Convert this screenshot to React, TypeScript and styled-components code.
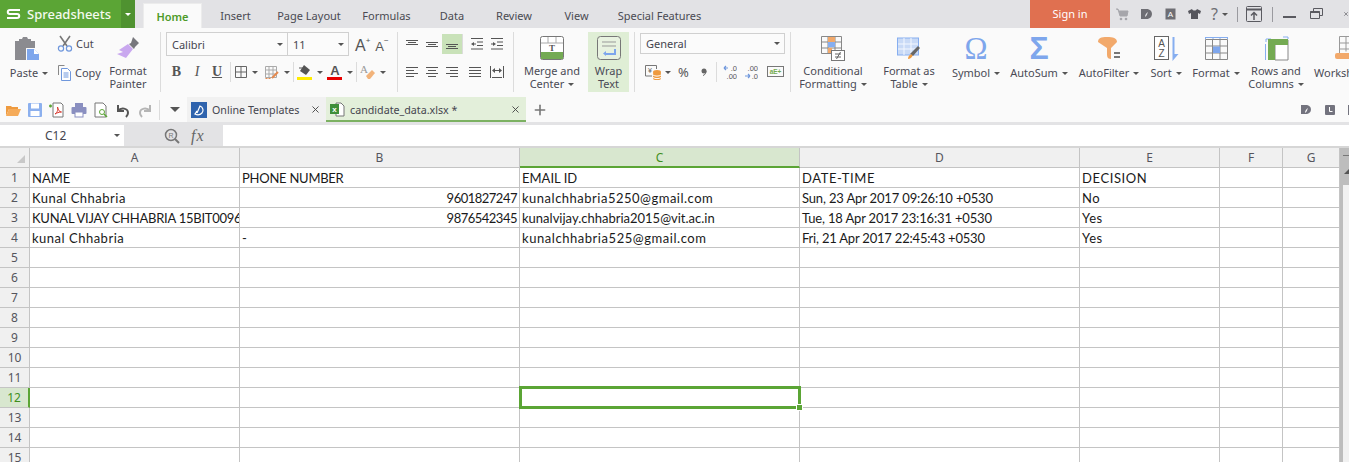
import { ReactNode } from "react";
import styled, { createGlobalStyle } from "styled-components";
import { Plus, X } from "lucide-react";

const UI_FONT = `"Noto Sans", "Open Sans", sans-serif`;
const GREEN = "#5ba535";
const LINE = "#c4c4c4";

const Global = createGlobalStyle`
  html, body { margin: 0; padding: 0; height: 462px; overflow: hidden; background: #fff; }
  * { box-sizing: border-box; }
`;

const Page = styled.div`
  width: 1349px;
  height: 462px;
  overflow: hidden;
  display: flex;
  flex-direction: column;
  font-family: ${UI_FONT};
  color: #45454f;
`;

const Gap = styled.span<{ $w: number }>`
  width: ${(p) => p.$w}px;
  flex: none;
`;

// --- title bar ---
const TitleBar = styled.div`
  height: 28px;
  flex: none;
  display: flex;
  background: #e2e2e5;
`;

const Logo = styled.div`
  width: 121px;
  background: ${GREEN};
  color: #f4faef;
  display: flex;
  align-items: center;
  gap: 6px;
  padding: 0 0 1px 6px;
  font-size: 13px;
  font-weight: 500;
  white-space: nowrap;
`;

const LogoCaret = styled.div`
  width: 14px;
  background: #4f9230;
  display: flex;
  align-items: center;
  justify-content: center;
`;

const Tabs = styled.div`
  display: flex;
  margin-left: 8px;
  width: 887px;
  align-items: flex-end;
`;

const Tab = styled.div<{ $w: number; $active?: boolean }>`
  width: ${(p) => p.$w}px;
  height: ${(p) => (p.$active ? 25 : 28)}px;
  padding-top: ${(p) => (p.$active ? 0 : 3)}px;
  display: flex;
  align-items: center;
  justify-content: center;
  font-size: 11px;
  color: ${(p) => (p.$active ? "#4d9a28" : "#4a4a52")};
  background: ${(p) => (p.$active ? "#fafafa" : "transparent")};
  border: ${(p) => (p.$active ? "1px solid #ececec" : "none")};
  border-bottom: none;
  font-weight: ${(p) => (p.$active ? 600 : 400)};
`;

const SignIn = styled.div`
  width: 80px;
  background: #e07050;
  color: #fff;
  font-size: 11px;
  display: flex;
  align-items: center;
  justify-content: center;
  padding-bottom: 1px;
`;

const WindowTools = styled.div`
  flex: 1;
  display: flex;
  align-items: center;
  padding-left: 6px;
  overflow: hidden;
`;

const ToolDivider = styled.span`
  width: 1px;
  height: 15px;
  background: #9a9a9f;
  flex: none;
`;

const HelpMark = styled.span`
  width: 18px;
  flex: none;
  display: flex;
  align-items: center;
  font-size: 16px;
  line-height: 16px;
  color: #6e6e74;
`;

// --- ribbon ---
const Ribbon = styled.div`
  height: 69px;
  flex: none;
  display: flex;
  background: #fafafa;
  overflow: hidden;
`;

const Group = styled.div<{ $w: number }>`
  width: ${(p) => p.$w}px;
  flex: none;
  display: flex;
  align-items: flex-start;
`;

const Sep = styled.div`
  width: 1px;
  height: 60px;
  margin-top: 4px;
  flex: none;
  background: #dcdcdc;
`;

const BigButton = styled.div<{ $w: number; $on?: boolean; $ml?: number }>`
  width: ${(p) => p.$w}px;
  margin-left: ${(p) => p.$ml ?? 0}px;
  flex: none;
  height: 60px;
  margin-top: 4px;
  display: flex;
  flex-direction: column;
  align-items: center;
  background: ${(p) => (p.$on ? "#dfeed5" : "transparent")};
  font-size: 11px;
  line-height: 13px;
  text-align: center;
  white-space: nowrap;
  color: #4a4a55;
`;

const IconSlot = styled.div`
  height: 32px;
  padding-top: 4px;
  display: flex;
  justify-content: center;
  flex: none;
`;

const OmegaSlot = styled(IconSlot)`
  padding-top: 1px;
  font-family: "Liberation Serif", serif;
  font-size: 31px;
  line-height: 31px;
  color: #7ea6ec;
`;

const SigmaSlot = styled(IconSlot)`
  padding-top: 1px;
  font-family: "Liberation Sans", sans-serif;
  font-size: 32px;
  line-height: 31px;
  font-weight: 700;
  color: #7ea6ec;
`;

const SheetSlot = styled(IconSlot)`
  justify-content: flex-start;
  padding-left: 21px;
`;

const SingleLabel = styled.span`
  display: block;
  margin-top: 2px;
`;

const PasteLabel = styled(SingleLabel)`
  padding-left: 4px;
`;

const Caret = styled.span`
  display: inline-block;
  width: 0;
  height: 0;
  margin-left: 4px;
  vertical-align: 2px;
  border-left: 3px solid transparent;
  border-right: 3px solid transparent;
  border-top: 3px solid #555;
  flex: none;
`;

const WhiteCaret = styled(Caret)`
  margin: 0;
  border-top-color: #fff;
`;

const QuickCaret = styled(Caret)`
  margin: 0 0 0 4px;
  border-left-width: 5px;
  border-right-width: 5px;
  border-top-width: 5px;
`;

const SmallStack = styled.div`
  width: 47px;
  flex: none;
  margin-left: 10px;
  padding-top: 7px;
  display: flex;
  flex-direction: column;
  gap: 13px;
  font-size: 11px;
  color: #4a4a55;
`;

const SmallRow = styled.div`
  display: flex;
  align-items: center;
  gap: 3px;
  height: 16px;
`;

const FontStack = styled.div`
  display: flex;
  flex-direction: column;
  padding: 4px 0 0 5px;
  gap: 4px;
`;

const ToolRow = styled.div`
  display: flex;
  align-items: center;
  height: 24px;
`;

const Select = styled.div<{ $w: number; $h?: number; $joined?: boolean }>`
  width: ${(p) => p.$w}px;
  height: ${(p) => p.$h ?? 24}px;
  border: 1px solid #d0d0d0;
  border-left-width: ${(p) => (p.$joined ? 0 : 1)}px;
  background: #fbfbfb;
  display: flex;
  align-items: center;
  justify-content: space-between;
  padding: 0 4px 0 5px;
  font-size: 11px;
  color: #45454f;
`;

const Toggle = styled.span<{ $w?: number; $b?: boolean; $i?: boolean; $u?: boolean }>`
  width: ${(p) => p.$w ?? 20}px;
  display: inline-flex;
  align-items: center;
  justify-content: center;
  flex: none;
  font-family: "Liberation Serif", serif;
  font-size: 14px;
  color: #555;
  font-weight: ${(p) => (p.$b ? 700 : 400)};
  font-style: ${(p) => (p.$i ? "italic" : "normal")};
  text-decoration: ${(p) => (p.$u ? "underline" : "none")};
`;

const Grow = styled.span<{ $size: number; $ml?: number }>`
  font-family: "Liberation Sans", sans-serif;
  font-size: ${(p) => p.$size}px;
  color: #555;
  margin-left: ${(p) => p.$ml ?? 0}px;
  position: relative;
  top: 2px;
`;

const Script = styled.sup`
  font-size: 8px;
  line-height: 0;
  vertical-align: 8px;
`;

const MiniSep = styled.span`
  width: 1px;
  height: 20px;
  background: #dcdcdc;
  margin: 0 3px;
  flex: none;
`;

const QuickSep = styled(MiniSep)`
  margin: 0;
`;

const AlignGrid = styled.div`
  display: grid;
  grid-template-columns: 20px 20px 20px 25px 20px;
  grid-auto-rows: 20px;
  row-gap: 8px;
  padding: 6px 0 0 4px;
`;

const AlignCell = styled.div<{ $on?: boolean; $rule?: boolean }>`
  display: flex;
  align-items: center;
  justify-content: center;
  background: ${(p) => (p.$on ? "#c9e2b9" : "transparent")};
  border-left: ${(p) => (p.$rule ? "1px solid #dcdcdc" : "none")};
  padding-left: ${(p) => (p.$rule ? 4 : 0)}px;
`;

const NumberStack = styled.div`
  display: flex;
  flex-direction: column;
  padding: 5px 0 0 5px;
  gap: 6px;
`;

const Percent = styled.span`
  font-size: 13px;
  color: #555;
  flex: none;
`;

const Worksheet = styled.div`
  flex: none;
  width: 60px;
  margin-left: 4px;
`;

const WorksheetButton = styled(BigButton)`
  align-items: flex-start;
  padding-left: 5px;
`;

// --- quick access / document tabs ---
const QuickRow = styled.div`
  height: 25px;
  flex: none;
  display: flex;
  align-items: stretch;
  background: #fafafa;
`;

const QuickIcons = styled.div`
  width: 187px;
  display: flex;
  align-items: center;
  gap: 6px;
  padding-left: 5px;
  flex: none;
`;

const DocTab = styled.div<{ $w: number; $active?: boolean }>`
  width: ${(p) => p.$w}px;
  flex: none;
  display: flex;
  align-items: center;
  gap: 5px;
  padding: 2px 5px 0 4px;
  font-size: 10.7px;
  background: ${(p) => (p.$active ? "#e3efda" : "#f1f1f1")};
  border-bottom: 2px solid ${(p) => (p.$active ? "#7cb162" : "#f1f1f1")};
  color: #45454f;
`;

const DocTitle = styled.span`
  flex: 1;
  white-space: nowrap;
`;

const AddTab = styled.div`
  width: 27px;
  flex: none;
  display: flex;
  align-items: center;
  justify-content: center;
`;

const QuickRight = styled.div`
  flex: 1;
  display: flex;
  align-items: center;
  justify-content: flex-end;
  overflow: hidden;
`;

const EdgeChip = styled.span`
  width: 1px;
  height: 10px;
  background: #73737e;
  flex: none;
`;

// --- formula bar ---
const FormulaBar = styled.div`
  height: 26px;
  flex: none;
  display: flex;
  background: #e3e3e5;
  padding: 3px 0 0;
  border-bottom: 2px solid #d6d6d6;
`;

const NameBox = styled.div`
  width: 124px;
  flex: none;
  background: #fff;
  font-size: 12px;
  display: flex;
  align-items: center;
  justify-content: space-between;
  padding: 0 4px 0 45px;
`;

const FormulaTools = styled.div`
  width: 99px;
  flex: none;
  display: flex;
  align-items: center;
  gap: 11px;
  padding-left: 40px;
`;

const Fx = styled.span`
  font-family: "Liberation Serif", serif;
  font-style: italic;
  font-size: 16px;
  letter-spacing: 1px;
  color: #666;
`;

const FormulaInput = styled.div`
  flex: 1;
  background: #fff;
`;

// --- sheet ---
const SheetArea = styled.div`
  flex: 1;
  display: flex;
  min-height: 0;
  overflow: hidden;
`;

const SheetGrid = styled.div`
  width: 1340px;
  flex: none;
  display: grid;
  grid-template-columns: 30px 210px 280px 280px 280px 140px 63px 57px;
  grid-auto-rows: 20px;
  align-content: start;
`;

const ColHead = styled.div<{ $on?: boolean }>`
  height: 20px;
  display: flex;
  align-items: center;
  justify-content: center;
  font-size: 12px;
  background: ${(p) => (p.$on ? "#d8e7cf" : "#f0f0f0")};
  color: ${(p) => (p.$on ? "#3f8f1d" : "#55555d")};
  border-right: 1px solid ${LINE};
  border-bottom: ${(p) => (p.$on ? `2px solid ${GREEN}` : `1px solid ${LINE}`)};
`;

const Corner = styled(ColHead)`
  align-items: flex-end;
  justify-content: flex-end;
  padding: 0 4px 4px 0;
`;

const RowHead = styled.div<{ $on?: boolean }>`
  display: flex;
  align-items: center;
  justify-content: center;
  font-size: 12px;
  background: ${(p) => (p.$on ? "#d8e7cf" : "#f0f0f0")};
  color: ${(p) => (p.$on ? "#3f8f1d" : "#55555d")};
  border-bottom: 1px solid ${LINE};
  border-right: ${(p) => (p.$on ? `2px solid ${GREEN}` : `1px solid ${LINE}`)};
`;

const Cell = styled.div<{ $right?: boolean; $track?: number }>`
  position: relative;
  border-right: 1px solid ${LINE};
  border-bottom: 1px solid ${LINE};
  font-family: "Lato", "Open Sans", sans-serif;
  font-size: 13px;
  letter-spacing: ${(p) => p.$track ?? 0}px;
  line-height: 20px;
  padding: 0 2px;
  color: #1a1a1a;
  white-space: nowrap;
  overflow: hidden;
  text-align: ${(p) => (p.$right ? "right" : "left")};
`;

const Selection = styled.div`
  position: absolute;
  left: -1px;
  top: -2px;
  width: 282px;
  height: 23px;
  border: 3px solid ${GREEN};
  pointer-events: none;
`;

const Handle = styled.div`
  position: absolute;
  left: 277px;
  top: 17px;
  width: 5px;
  height: 5px;
  background: ${GREEN};
  outline: 1px solid #fff;
`;

const SelectedCell = styled(Cell)`
  overflow: visible;
  z-index: 2;
`;

const ScrollBar = styled.div`
  flex: 1;
  display: flex;
  flex-direction: column;
  border-left: 3px solid #bdbdbd;
  background: #f1f1f1;
  overflow: hidden;
`;

const ScrollTop = styled.div`
  height: 37px;
  background: #bdbdbd;
  display: flex;
  flex-direction: column;
  align-items: flex-start;
  gap: 13px;
  padding-top: 7px;
`;

const ScrollLine = styled.span`
  width: 100%;
  height: 1px;
  background: #777;
  flex: none;
`;

const ScrollArrow = styled.span`
  width: 0;
  height: 0;
  flex: none;
  margin-left: 1px;
  border-left: 5px solid transparent;
  border-right: 5px solid transparent;
  border-bottom: 5px solid #555;
`;

// --- drawn icons ---
const I = ({ w = 16, h = 16, children }: { w?: number; h?: number; children: ReactNode }) => (
  <svg width={w} height={h} viewBox={`0 0 ${w} ${h}`} fill="none" style={{ flex: "none", display: "block" }}>
    {children}
  </svg>
);

const PasteIcon = () => (
  <I w={26} h={25}>
    <path d="M1 5h4V3h3l1-2h4l1 2h3v2h4v7H12v12H1z" fill="#8b8b90" />
    <path d="M13 13h7l5 5v6H13z" fill="#7ea6ec" />
    <path d="M20 13v5h5" fill="#fff" />
  </I>
);

const Scissors = () => (
  <I w={16} h={17}>
    <path d="M3 1l7 10M13 1L6 11" stroke="#777" strokeWidth="1.6" />
    <circle cx="4" cy="13.5" r="2.6" stroke="#6f97dc" strokeWidth="1.2" />
    <circle cx="12" cy="13.5" r="2.6" stroke="#6f97dc" strokeWidth="1.2" />
  </I>
);

const CopyIcon = () => (
  <I w={15} h={17}>
    <path d="M1.5 11V1.5h6" stroke="#888" />
    <path d="M4.5 4.5h6l3 3v9h-9z" fill="#fff" stroke="#6f97dc" />
    <path d="M6.5 9h5M6.5 11h5M6.5 13h5" stroke="#6f97dc" />
  </I>
);

const Brush = () => (
  <I w={25} h={25}>
    <path d="M17 1l6 6-4 4-1 2-5-5 2-1z" fill="#77777d" />
    <path d="M12 8l5 5-7 9-9-4 6-2-4-2z" fill="#c9a8ef" />
  </I>
);

const BordersIcon = () => (
  <I w={14} h={14}>
    <path d="M1.5 1.5h11v11h-11zM7 1.5v11M1.5 7h11" stroke="#666" />
  </I>
);

const TableBorder = () => (
  <I w={16} h={15}>
    <path d="M1.5 1.5h11v11h-11zM5 1.5v11M9 1.5v11M1.5 5h11M1.5 9h11" stroke="#aaa" />
    <path d="M1.5 13.5h6" stroke="#e58a4e" strokeDasharray="2 1" />
    <path d="M8 13l6-6" stroke="#e58a4e" strokeWidth="2" />
  </I>
);

const FillIcon = () => (
  <I w={16} h={16}>
    <path d="M7 1l6 5-4 5-6-4z" fill="#555" />
    <path d="M2 4h6" stroke="#555" />
    <rect x="0" y="13" width="15" height="3" fill="#ffec00" />
  </I>
);

const FontColor = () => (
  <I w={16} h={16}>
    <text x="8" y="11" textAnchor="middle" fontFamily="Liberation Sans" fontWeight="700" fontSize="13" fill="#555">
      A
    </text>
    <rect x="0" y="13" width="15" height="3" fill="#e80000" />
  </I>
);

const Eraser = () => (
  <I w={16} h={16}>
    <text x="0" y="9" fontFamily="Liberation Serif" fontSize="11" fill="#999">
      A
    </text>
    <path d="M6 12l6-6 3 3-5 6H8z" fill="#f2b37a" />
  </I>
);

const Lines = ({ kind }: { kind: "top" | "mid" | "bottom" | "left" | "center" | "right" | "just" }) => {
  const layouts: Record<string, string> = {
    top: "M1 2.500h12M3 4.500h8M1 6.500h12",
    mid: "M1 4.500h12M3 6.500h8M1 8.500h12",
    bottom: "M1 6.500h12M3 8.500h8M1 10.500h12",
    left: "M1 1.500h12M1 4.500h8M1 7.500h12M1 10.500h8",
    center: "M1 1.500h12M3 4.500h8M1 7.500h12M3 10.500h8",
    right: "M1 1.500h12M5 4.500h8M1 7.500h12M5 10.500h8",
    just: "M1 1.500h12M1 4.500h12M1 7.500h12M1 10.500h12",
  };
  return (
    <I w={14} h={13}>
      <path d={layouts[kind]} stroke="#555" />
    </I>
  );
};

const Indent = ({ out }: { out?: boolean }) => (
  <I w={14} h={14}>
    <path d="M1 1.500h12M7 5h6M7 8.500h6M1 12h12" stroke="#555" />
    <path d={out ? "M1 7l3-2v4z" : "M6 7L3 5v4z"} fill="#555" />
    <path d={out ? "M3 7h3" : "M1 7h3"} stroke="#555" />
  </I>
);

const Distribute = () => (
  <I w={16} h={14}>
    <path d="M1.500 1v12M14.500 1v12M3 12.500h10M4 5.500h8" stroke="#555" />
    <path d="M3 5.500l3-2.500v5zM13 5.500L10 3v5z" fill="#555" />
  </I>
);

const MergeIcon = () => (
  <I w={24} h={24}>
    <rect x="0.5" y="0.5" width="23" height="23" rx="2" fill="#fff" stroke="#777" />
    <path d="M8 1v6M16 1v6M1 7h22" stroke="#aaa" />
    <rect x="1" y="16" width="22" height="7" fill="#74aa53" />
    <text x="12" y="14.500" textAnchor="middle" fontFamily="Liberation Serif" fontWeight="700" fontSize="9" fill="#555">
      T
    </text>
  </I>
);

const WrapIcon = () => (
  <I w={24} h={24}>
    <rect x="0.5" y="0.5" width="23" height="23" rx="3" fill="#e8f2e0" stroke="#777" />
    <path d="M5 6h14M5 10h14" stroke="#999" />
    <path d="M18 13v5H8" stroke="#7ea6ec" strokeWidth="2" />
    <path d="M9 15v5l-3-2.500z" fill="#7ea6ec" />
  </I>
);

const CurrencyIcon = () => (
  <I w={17} h={17}>
    <path d="M8 12H1.500V1.500h11V5" stroke="#777" />
    <text x="4" y="9" fontFamily="Liberation Sans" fontSize="7" fill="#666">
      ¥
    </text>
    <ellipse cx="13" cy="8" rx="4" ry="2" fill="#ee9a3f" />
    <rect x="9" y="8" width="8" height="8" rx="2" fill="#ee9a3f" />
    <path d="M9 11c2 1.500 6 1.500 8 0M9 13.500c2 1.500 6 1.500 8 0" stroke="#fff" />
  </I>
);

const CommaIcon = () => (
  <I w={6} h={8}>
    <circle cx="3" cy="3" r="2.500" fill="#666" />
    <path d="M5 3c0 2-1 4-3 4.500" stroke="#666" />
  </I>
);

const DecimalIcon = ({ more }: { more?: boolean }) => (
  <I w={14} h={16}>
    <text x="14" y="7" textAnchor="end" fontFamily="Liberation Sans" fontSize="7.500" fill="#555">
      {more ? ".0" : ".00"}
    </text>
    <text x="14" y="15" textAnchor="end" fontFamily="Liberation Sans" fontSize="7.500" fill="#555">
      {more ? ".00" : ".0"}
    </text>
    <path d={more ? "M1 4h4M1 4l2-2M1 4l2 2" : "M1 12h5M6 12l-2-2M6 12l-2 2"} stroke="#6f97dc" strokeWidth="1.200" />
  </I>
);

const AeIcon = () => (
  <I w={17} h={12}>
    <rect x="0.5" y="0.500" width="16" height="10" stroke="#777" />
    <text x="8.500" y="8" textAnchor="middle" fontFamily="Liberation Sans" fontWeight="700" fontSize="6.500" fill="#74aa53">
      aE+
    </text>
  </I>
);

const CondIcon = () => (
  <I w={24} h={25}>
    <path d="M.5.500h20v17H.5zM7 .5v17M14 .5v17M.5 6h20M.5 12h20" stroke="#888" />
    <rect x="7" y="1" width="7" height="5" fill="#f2a96b" />
    <rect x="7" y="6" width="7" height="5" fill="#86aef0" />
    <rect x="7" y="12" width="4" height="5" fill="#f2a96b" />
    <rect x="10.500" y="14.500" width="13" height="10" fill="#fff" stroke="#777" />
    <path d="M14 18h6M14 21h6M15.500 23l4-7" stroke="#666" />
  </I>
);

const TableStyleIcon = () => (
  <I w={24} h={24}>
    <rect x="0.5" y="2" width="21" height="17" fill="#c9daf6" stroke="#86aef0" />
    <path d="M7 2v17M14 2v17M1 8h20M1 13h20" stroke="#f4f8ff" />
    <path d="M13 18l8-8 2 2-7 8z" fill="#666" />
    <path d="M11 23c0-3 2-5 4-4.500 1 1 0 4-4 4.500z" fill="#ee9a3f" />
  </I>
);

const FunnelIcon = () => (
  <I w={24} h={24}>
    <path d="M1 6C1 2 4 1 10 1s10 1 10 5l-6 6v11c-2 0-4-1-4-4v-7z" fill="#f2a96b" />
    <path d="M17 17h6M17 21h6" stroke="#777" strokeWidth="2" />
  </I>
);

const SortIcon = () => (
  <I w={25} h={25}>
    <rect x="0.5" y="0.5" width="14" height="23" stroke="#666" fill="#fff" />
    <text x="7.500" y="11" textAnchor="middle" fontFamily="Liberation Sans" fontSize="10" fill="#555">
      A
    </text>
    <text x="7.500" y="21" textAnchor="middle" fontFamily="Liberation Sans" fontSize="10" fill="#555">
      Z
    </text>
    <path d="M18.500 1h2v17h4l-6 7z" fill="#86aef0" />
  </I>
);

const FormatIcon = () => (
  <I w={23} h={25}>
    <path d="M.5 1v2M8 1v2M15 1v2M22.500 1v2M.5 1.500h22" stroke="#86aef0" />
    <path d="M.5 3.500h22v20H.5zM7.500 3.500v20M15 3.500v20M.5 10h22M.5 17h22" stroke="#888" />
    <rect x="8" y="10.500" width="7" height="6.500" fill="#7ea6ec" />
  </I>
);

const RowsIcon = () => (
  <I w={25} h={25}>
    <path d="M2 6V3h5M19 1h5v2" stroke="#86aef0" />
    <path d="M11 4h13v20H11z" fill="#fff" stroke="#888" />
    <rect x="4" y="3" width="20" height="6" fill="#74aa53" />
    <rect x="4" y="9" width="7" height="15" fill="#74aa53" />
    <path d="M1.500 8v16" stroke="#86aef0" />
  </I>
);

const WorksheetIcon = () => (
  <I w={24} h={25}>
    <path d="M4.500 .5h19v22h-19zM4.500 7h19M4.500 13h19M11 .5v15M17 .5v15" stroke="#999" />
    <rect x="0" y="17" width="24" height="6" rx="2" fill="#f2a96b" />
  </I>
);

const QuickSet = () => (
  <>
    <I>
      <path d="M1 4h5l1 1h6v2H4L1 14z" fill="#ee9a3f" />
      <path d="M4 7h12l-3 7H1z" fill="#f5ab5a" />
    </I>
    <I>
      <rect x="1" y="1" width="14" height="14" rx="1" fill="#8cb0ee" />
      <rect x="4" y="1.500" width="8" height="5" fill="#fff" />
      <rect x="3.500" y="9" width="9" height="5" fill="#fff" />
    </I>
    <I>
      <path d="M4 1h8l2 2v12H4z" fill="#fff" stroke="#777" />
      <path d="M0 4h3M1.500 2.500v3" stroke="#5ba535" strokeWidth="1.500" />
      <path d="M6 12c3-2 3-5 2.500-7 .5 3 2 5 4 5-3 0-4.500 1-6.500 2z" stroke="#d9352b" />
    </I>
    <I>
      <rect x="4" y="1" width="8" height="4" fill="#8a8fc0" />
      <rect x="0.500" y="5" width="15" height="7" rx="1" fill="#8a8fc0" />
      <rect x="4" y="10" width="8" height="5" fill="#fff" stroke="#8a8fc0" />
    </I>
    <I>
      <path d="M2 1h8l3 3v11H2z" fill="#fff" stroke="#777" />
      <circle cx="9" cy="10" r="2.500" stroke="#5ba535" />
      <path d="M11 12l3 3" stroke="#5ba535" strokeWidth="1.500" />
    </I>
    <I>
      <path d="M3 3v6h6" stroke="#555" strokeWidth="2" />
      <path d="M3 9c3-4 10-3 10 2 0 1-1 3-2 4" stroke="#555" strokeWidth="2" />
    </I>
    <I>
      <path d="M13 3v6H7" stroke="#b5b5b5" strokeWidth="2" />
      <path d="M13 9C10 5 3 6 3 11c0 1 1 3 2 4" stroke="#b5b5b5" strokeWidth="2" />
    </I>
  </>
);

const DocLogo = () => (
  <I>
    <rect width="16" height="16" fill="#2f63ad" />
    <path d="M6 11l3-7c3 1 4 5 2 7-2 2-5 2-7 1 1-1 1-2 2-3" stroke="#fff" strokeWidth="1.200" />
  </I>
);

const XlsxIcon = () => (
  <I w={15} h={15}>
    <path d="M6 1h5l3 3v10H6z" fill="#fff" stroke="#777" />
    <rect x="0" y="2" width="9" height="10" fill="#3f8f3a" />
    <text x="4.500" y="10" textAnchor="middle" fontFamily="Liberation Sans" fontWeight="700" fontSize="8" fill="#fff">
      x
    </text>
  </I>
);

const SearchR = () => (
  <I>
    <circle cx="7" cy="7" r="5.500" stroke="#777" strokeWidth="1.500" />
    <path d="M11 11l4 4" stroke="#777" strokeWidth="2" />
    <text x="7" y="9.500" textAnchor="middle" fontFamily="Liberation Sans" fontSize="7" fill="#777">
      R
    </text>
  </I>
);

const LogoS = () => (
  <I w={15} h={12}>
    <path d="M14 2H4C1 2 1 6 4 6h7c3 0 3 4 0 4H1" stroke="#fff" strokeWidth="2" />
  </I>
);

const LeafBadge = ({ size, fill, leaf }: { size: number; fill: string; leaf: string }) => (
  <I w={size} h={size + 1}>
    <path d={`M0 1h${size / 2}c${size * 0.66} 0 ${size * 0.66} ${size - 1} 0 ${size - 1}H0z`} fill={fill} />
    <path d="M4 9c0-2 1-4 3-5-1 2-1 4-3 5z" fill={leaf} />
  </I>
);

const ClockChip = () => (
  <I w={10} h={10}>
    <rect width="10" height="10" rx="1" fill="#73737e" />
    <path d="M4.500 2v4.500H7.500" stroke="#fff" />
  </I>
);

const HeadIcons = () => (
  <>
    <I w={13} h={13}>
      <path d="M0 1h2l2 7h7l1-5H3" fill="#a6a6ab" stroke="#a6a6ab" />
      <circle cx="5" cy="11" r="1.300" fill="#a6a6ab" />
      <circle cx="10" cy="11" r="1.300" fill="#a6a6ab" />
    </I>
    <Gap $w={12} />
    <LeafBadge size={11} fill="#6e6e74" leaf="#e2e2e5" />
    <Gap $w={13} />
    <I w={11} h={13}>
      <rect x="0.500" y="0.500" width="10" height="11" fill="#6e6e74" />
      <text x="5.500" y="9" textAnchor="middle" fontFamily="Liberation Sans" fontSize="8" fill="#fff">
        A
      </text>
    </I>
    <Gap $w={12} />
    <I w={13} h={12}>
      <path d="M4 1L0 3l1 3 2-1v6h7V5l2 1 1-3-4-2c-1 2-4 2-5 0z" fill="#55555c" />
    </I>
    <Gap $w={10} />
    <HelpMark>
      ?
      <Caret />
    </HelpMark>
    <Gap $w={8} />
    <ToolDivider />
    <Gap $w={8} />
    <I>
      <rect x="0.500" y="0.500" width="15" height="15" rx="1" stroke="#5a5a60" />
      <path d="M1 3.500h14" stroke="#5a5a60" strokeWidth="2" />
      <path d="M8 14V7M5 9.500L8 6.500l3 3" stroke="#5a5a60" strokeWidth="1.500" />
    </I>
    <Gap $w={10} />
    <ToolDivider />
    <Gap $w={10} />
    <I w={13} h={14}>
      <path d="M0 10h13" stroke="#5a5a60" strokeWidth="2" />
    </I>
    <Gap $w={14} />
    <I w={13} h={12}>
      <path d="M3.500 3V.5h9v7H10M.5 3.500h9v7h-9z" stroke="#5a5a60" />
      <path d="M.5 4h9" stroke="#5a5a60" strokeWidth="2" />
    </I>
    <Gap $w={20} />
    <X size={14} color="#5a5a60" strokeWidth={2.5} />
  </>
);

// --- data ---
const tabs: [string, number][] = [
  ["Insert", 67],
  ["Page Layout", 80],
  ["Formulas", 75],
  ["Data", 56],
  ["Review", 68],
  ["View", 57],
  ["Special Features", 109],
];

const columns = ["A", "B", "C", "D", "E", "F", "G"];

// text and letter spacing, tuned per value because Calibri itself is not installed
type Value = [string, number?];

const rows: Value[][] = [
  [["NAME"], ["PHONE NUMBER", -0.25], ["EMAIL ID"], ["DATE-TIME", 0.6], ["DECISION", 0.6]],
  [["Kunal Chhabria", 0.5], ["9601827247", -0.5], ["kunalchhabria5250@gmail.com", 0.5], ["Sun, 23 Apr 2017 09:26:10 +0530", -0.16], ["No", 0.5]],
  [["KUNAL VIJAY CHHABRIA 15BIT0096", -0.25], ["9876542345", -0.5], ["kunalvijay.chhabria2015@vit.ac.in"], ["Tue, 18 Apr 2017 23:16:31 +0530", -0.16], ["Yes", 0.5]],
  [["kunal Chhabria", 0.5], ["-"], ["kunalchhabria525@gmail.com", 0.55], ["Fri, 21 Apr 2017 22:45:43 +0530", -0.2], ["Yes", 0.5]],
];

const isNumber = (v: string) => /^\d+$/.test(v);

function RowFragment({ index }: { index: number }) {
  const values = rows[index] ?? [];
  return (
    <>
      <RowHead $on={index === 11}>{index + 1}</RowHead>
      {columns.map((c, i) => {
        const [text = "", track] = values[i] ?? [];
        if (index === 11 && c === "C") {
          return (
            <SelectedCell key={c}>
              <Selection />
              <Handle />
            </SelectedCell>
          );
        }
        return (
          <Cell key={c} $right={isNumber(text)} $track={track}>
            {text}
          </Cell>
        );
      })}
    </>
  );
}

export default function App() {
  return (
    <Page>
      <Global />
      <TitleBar>
        <Logo>
          <LogoS />
          Spreadsheets
        </Logo>
        <LogoCaret>
          <WhiteCaret />
        </LogoCaret>
        <Tabs>
          <Tab $w={59} $active>
            Home
          </Tab>
          {tabs.map(([name, w]) => (
            <Tab key={name} $w={w}>
              {name}
            </Tab>
          ))}
        </Tabs>
        <SignIn>Sign in</SignIn>
        <WindowTools>
          <HeadIcons />
        </WindowTools>
      </TitleBar>

      <Ribbon>
        <Group $w={160}>
          <BigButton $w={40} $ml={7}>
            <IconSlot>
              <PasteIcon />
            </IconSlot>
            <PasteLabel>
              Paste
              <Caret />
            </PasteLabel>
          </BigButton>
          <SmallStack>
            <SmallRow>
              <Scissors />
              Cut
            </SmallRow>
            <SmallRow>
              <CopyIcon />
              Copy
            </SmallRow>
          </SmallStack>
          <BigButton $w={44} $ml={2}>
            <IconSlot>
              <Brush />
            </IconSlot>
            <span>
              Format
              <br />
              Painter
            </span>
          </BigButton>
        </Group>
        <Sep />
        <Group $w={236}>
          <FontStack>
            <ToolRow>
              <Select $w={122}>
                Calibri
                <Caret />
              </Select>
              <Select $w={61} $joined>
                11
                <Caret />
              </Select>
              <Grow $size={16} $ml={6}>
                A<Script>+</Script>
              </Grow>
              <Grow $size={13} $ml={5}>
                A<Script>−</Script>
              </Grow>
            </ToolRow>
            <ToolRow>
              <Toggle $w={21} $b>
                B
              </Toggle>
              <Toggle $i>I</Toggle>
              <Toggle $u $b>
                U
              </Toggle>
              <MiniSep />
              <BordersIcon />
              <Caret />
              <Gap $w={6} />
              <TableBorder />
              <Caret />
              <MiniSep />
              <FillIcon />
              <Caret />
              <Gap $w={4} />
              <FontColor />
              <Caret />
              <MiniSep />
              <Eraser />
              <Caret />
            </ToolRow>
          </FontStack>
        </Group>
        <Sep />
        <Group $w={115}>
          <AlignGrid>
            <AlignCell>
              <Lines kind="top" />
            </AlignCell>
            <AlignCell>
              <Lines kind="mid" />
            </AlignCell>
            <AlignCell $on>
              <Lines kind="bottom" />
            </AlignCell>
            <AlignCell $rule>
              <Indent out />
            </AlignCell>
            <AlignCell>
              <Indent />
            </AlignCell>
            <AlignCell>
              <Lines kind="left" />
            </AlignCell>
            <AlignCell>
              <Lines kind="center" />
            </AlignCell>
            <AlignCell>
              <Lines kind="right" />
            </AlignCell>
            <AlignCell>
              <Lines kind="just" />
            </AlignCell>
            <AlignCell>
              <Distribute />
            </AlignCell>
          </AlignGrid>
        </Group>
        <Sep />
        <Group $w={120}>
          <BigButton $w={60} $ml={8}>
            <IconSlot>
              <MergeIcon />
            </IconSlot>
            <span>
              Merge and
              <br />
              Center
              <Caret />
            </span>
          </BigButton>
          <BigButton $w={41} $ml={6} $on>
            <IconSlot>
              <WrapIcon />
            </IconSlot>
            <span>
              Wrap
              <br />
              Text
            </span>
          </BigButton>
        </Group>
        <Sep />
        <Group $w={155}>
          <NumberStack>
            <Select $w={145} $h={21}>
              General
              <Caret />
            </Select>
            <ToolRow>
              <Gap $w={4} />
              <CurrencyIcon />
              <Caret />
              <Gap $w={7} />
              <Percent>%</Percent>
              <Gap $w={12} />
              <CommaIcon />
              <Gap $w={6} />
              <MiniSep />
              <Gap $w={3} />
              <DecimalIcon more />
              <Gap $w={7} />
              <DecimalIcon />
              <Gap $w={9} />
              <AeIcon />
            </ToolRow>
          </NumberStack>
        </Group>
        <Sep />
        <BigButton $w={68} $ml={8}>
          <IconSlot>
            <CondIcon />
          </IconSlot>
          <span>
            Conditional
            <br />
            Formatting
            <Caret />
          </span>
        </BigButton>
        <BigButton $w={56} $ml={14}>
          <IconSlot>
            <TableStyleIcon />
          </IconSlot>
          <span>
            Format as
            <br />
            Table
            <Caret />
          </span>
        </BigButton>
        <BigButton $w={52} $ml={13}>
          <OmegaSlot>Ω</OmegaSlot>
          <SingleLabel>
            Symbol
            <Caret />
          </SingleLabel>
        </BigButton>
        <BigButton $w={58} $ml={8}>
          <SigmaSlot>Σ</SigmaSlot>
          <SingleLabel>
            AutoSum
            <Caret />
          </SingleLabel>
        </BigButton>
        <BigButton $w={62} $ml={10}>
          <IconSlot>
            <FunnelIcon />
          </IconSlot>
          <SingleLabel>
            AutoFilter
            <Caret />
          </SingleLabel>
        </BigButton>
        <BigButton $w={34} $ml={9}>
          <IconSlot>
            <SortIcon />
          </IconSlot>
          <SingleLabel>
            Sort
            <Caret />
          </SingleLabel>
        </BigButton>
        <BigButton $w={48} $ml={9}>
          <IconSlot>
            <FormatIcon />
          </IconSlot>
          <SingleLabel>
            Format
            <Caret />
          </SingleLabel>
        </BigButton>
        <BigButton $w={58} $ml={7}>
          <IconSlot>
            <RowsIcon />
          </IconSlot>
          <span>
            Rows and
            <br />
            Columns
            <Caret />
          </span>
        </BigButton>
        <Worksheet>
          <WorksheetButton $w={60}>
            <SheetSlot>
              <WorksheetIcon />
            </SheetSlot>
            <SingleLabel>Worksheet</SingleLabel>
          </WorksheetButton>
        </Worksheet>
      </Ribbon>

      <QuickRow>
        <QuickIcons>
          <QuickSet />
          <QuickSep />
          <QuickCaret />
        </QuickIcons>
        <DocTab $w={139}>
          <DocLogo />
          <DocTitle>Online Templates</DocTitle>
          <X size={11} color="#444" />
        </DocTab>
        <DocTab $w={200} $active>
          <XlsxIcon />
          <DocTitle>candidate_data.xlsx *</DocTitle>
          <X size={11} color="#444" />
        </DocTab>
        <AddTab>
          <Plus size={16} color="#777" strokeWidth={2.4} />
        </AddTab>
        <QuickRight>
          <LeafBadge size={10} fill="#73737e" leaf="#fafafa" />
          <Gap $w={14} />
          <ClockChip />
          <Gap $w={13} />
          <EdgeChip />
        </QuickRight>
      </QuickRow>

      <FormulaBar>
        <NameBox>
          C12
          <Caret />
        </NameBox>
        <FormulaTools>
          <SearchR />
          <Fx>fx</Fx>
        </FormulaTools>
        <FormulaInput />
      </FormulaBar>

      <SheetArea>
        <SheetGrid>
          <Corner>
            <I w={8} h={8}>
              <path d="M8 0v8H0z" fill="#c8c8c8" />
            </I>
          </Corner>
          {columns.map((c) => (
            <ColHead key={c} $on={c === "C"}>
              {c}
            </ColHead>
          ))}
          {Array.from({ length: 15 }, (_, r) => (
            <RowFragment key={r} index={r} />
          ))}
        </SheetGrid>
        <ScrollBar>
          <ScrollTop>
            <ScrollLine />
            <ScrollArrow />
          </ScrollTop>
        </ScrollBar>
      </SheetArea>
    </Page>
  );
}
